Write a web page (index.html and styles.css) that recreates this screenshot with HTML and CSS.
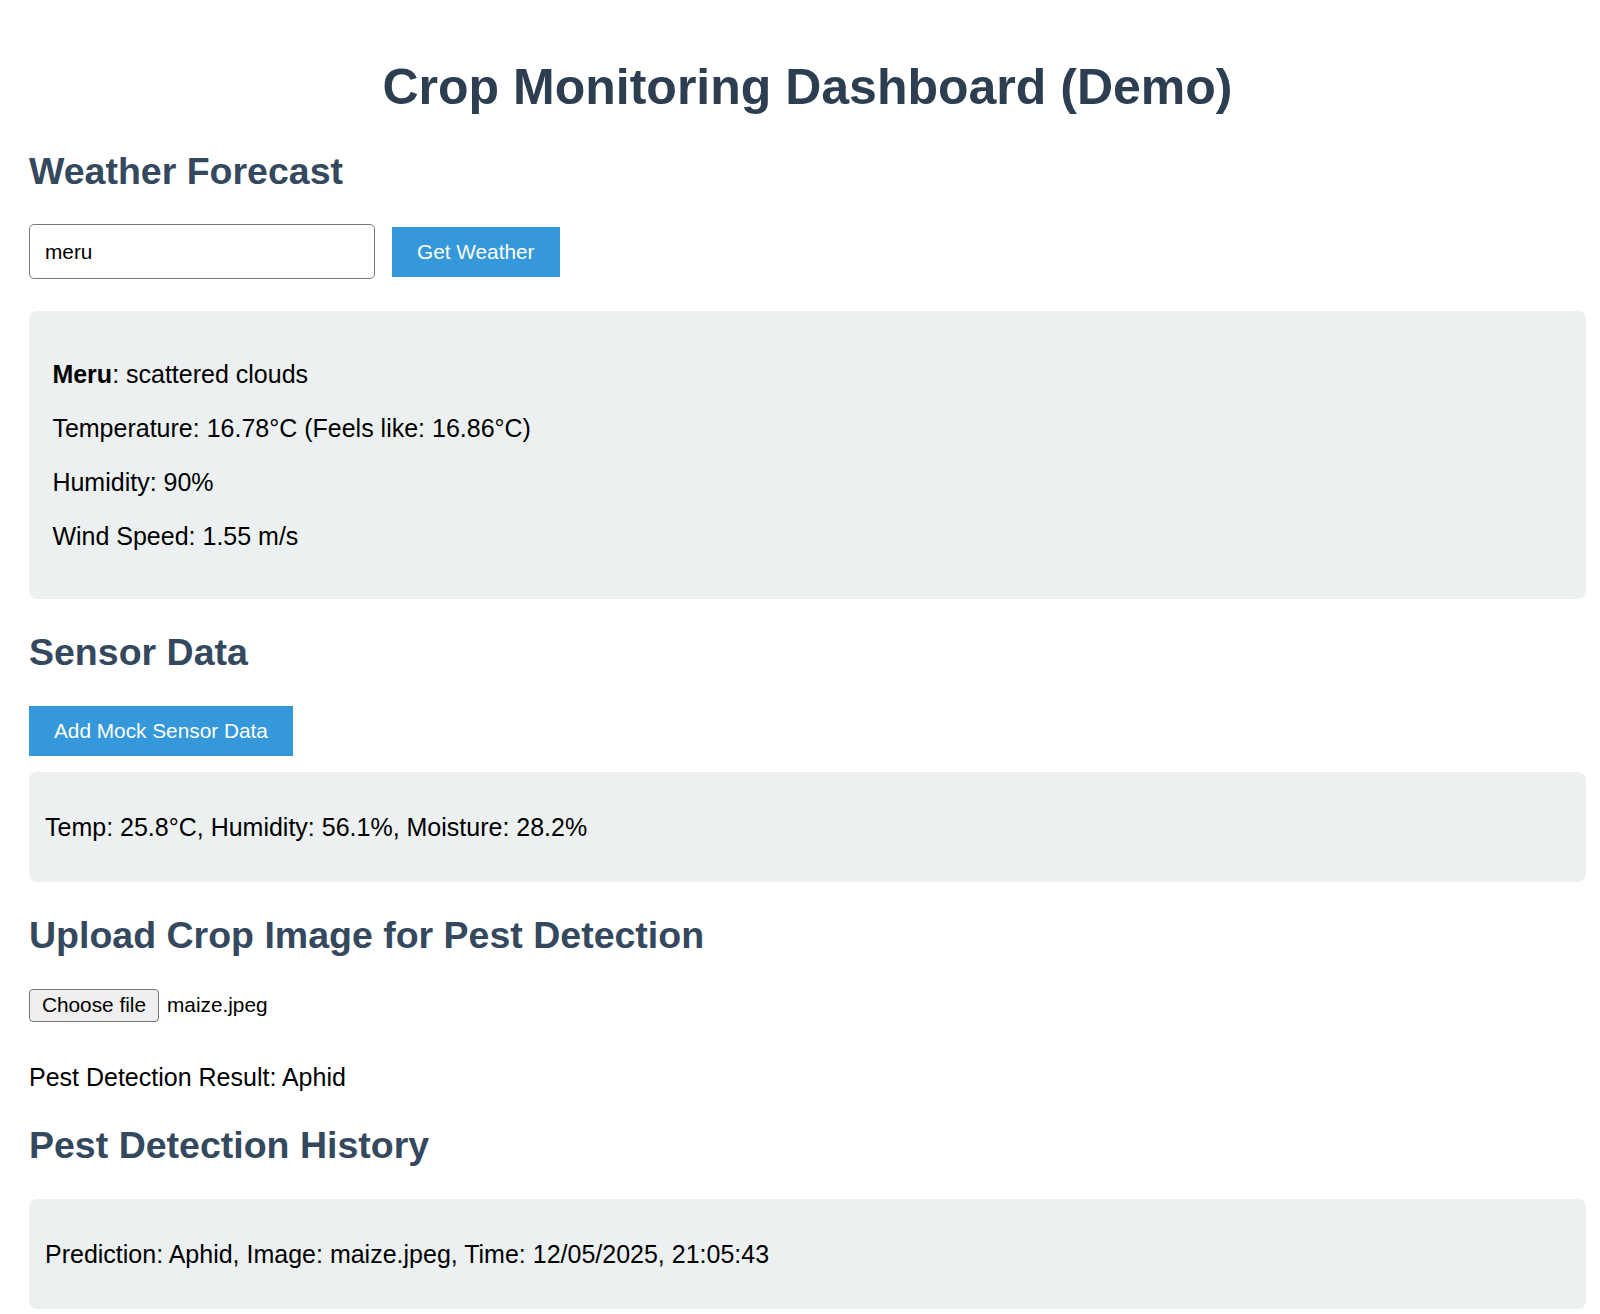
FILE: index.html
```html
<!DOCTYPE html>
<html lang="en">
<head>
<meta charset="utf-8">
<title>Crop Monitoring Dashboard (Demo)</title>
<link rel="stylesheet" href="styles.css">
</head>
<body>
  <h1 class="title">Crop Monitoring Dashboard (Demo)</h1>

  <section class="section">
    <h2 class="section-title">Weather Forecast</h2>
    <div class="search-row">
      <input class="city-input" type="text" value="meru">
      <button class="btn">Get Weather</button>
    </div>
    <div class="card card-weather">
      <p class="line"><strong>Meru</strong>: scattered clouds</p>
      <p class="line">Temperature: 16.78°C (Feels like: 16.86°C)</p>
      <p class="line">Humidity: 90%</p>
      <p class="line">Wind Speed: 1.55 m/s</p>
    </div>
  </section>

  <section class="section">
    <h2 class="section-title">Sensor Data</h2>
    <div class="actions">
      <button class="btn">Add Mock Sensor Data</button>
    </div>
    <div class="card card-compact">
      <p class="line">Temp: 25.8°C, Humidity: 56.1%, Moisture: 28.2%</p>
    </div>
  </section>

  <section class="section">
    <h2 class="section-title">Upload Crop Image for Pest Detection</h2>
    <div class="file-row">
      <button class="file-btn">Choose file</button>
      <span class="file-name">maize.jpeg</span>
    </div>
    <p class="line result">Pest Detection Result: Aphid</p>
  </section>

  <section class="section">
    <h2 class="section-title">Pest Detection History</h2>
    <div class="card card-compact">
      <p class="line">Prediction: Aphid, Image: maize.jpeg, Time: 12/05/2025, 21:05:43</p>
    </div>
  </section>
</body>
</html>
```
FILE: styles.css
```css
html {
  background: #ffffff;
}

body {
  margin: 0;
  padding: 25px 14px 0 29px;
  font-family: "Liberation Sans", Arial, Helvetica, sans-serif;
  font-size: 25px;
  line-height: 28.75px;
  color: #000000;
  background: #ffffff;
}

.title {
  margin: 33.5px 0;
  font-size: 50px;
  line-height: 57.5px;
  font-weight: 700;
  text-align: center;
  color: #2c3e50;
}

.section-title {
  margin: 31.75px 0;
  font-size: 37.5px;
  line-height: 43px;
  font-weight: 700;
  color: #34495e;
}

.search-row {
  display: flex;
  align-items: center;
  gap: 17px;
  margin-bottom: 31.5px;
}

.city-input {
  box-sizing: border-box;
  width: 346px;
  height: 55px;
  margin: 0;
  padding: 0 15px;
  border: 1.5px solid #767676;
  border-radius: 5px;
  font-family: "Liberation Sans", Arial, Helvetica, sans-serif;
  font-size: 20.8px;
  color: #000000;
  background: #ffffff;
  outline: none;
}

.btn {
  box-sizing: border-box;
  height: 50px;
  margin: 0;
  padding: 0 25px;
  border: none;
  border-radius: 0;
  background: #3498db;
  color: #ffffff;
  font-family: "Liberation Sans", Arial, Helvetica, sans-serif;
  font-size: 20.8px;
  line-height: 24px;
  cursor: pointer;
}

.actions {
  display: flex;
}

.card {
  background: #ecf0f1;
  border-radius: 8px;
}

.card-weather {
  padding: 23.8px 23.4px;
}

.card-compact {
  margin-top: 16px;
  padding: 15.6px 16px;
}

.line {
  margin: 25.2px 0;
}

.file-row {
  display: flex;
  align-items: center;
  gap: 8px;
  margin-bottom: 41px;
}

.result {
  margin-bottom: 33px;
}

.file-btn {
  box-sizing: border-box;
  height: 33px;
  width: 130px;
  margin: 0;
  padding: 0;
  border: 1.5px solid #767676;
  border-radius: 4px;
  background: #efefef;
  color: #000000;
  font-family: "Liberation Sans", Arial, Helvetica, sans-serif;
  font-size: 20.8px;
  line-height: 24px;
}

.file-name {
  font-size: 20.8px;
  line-height: 24px;
}
```
